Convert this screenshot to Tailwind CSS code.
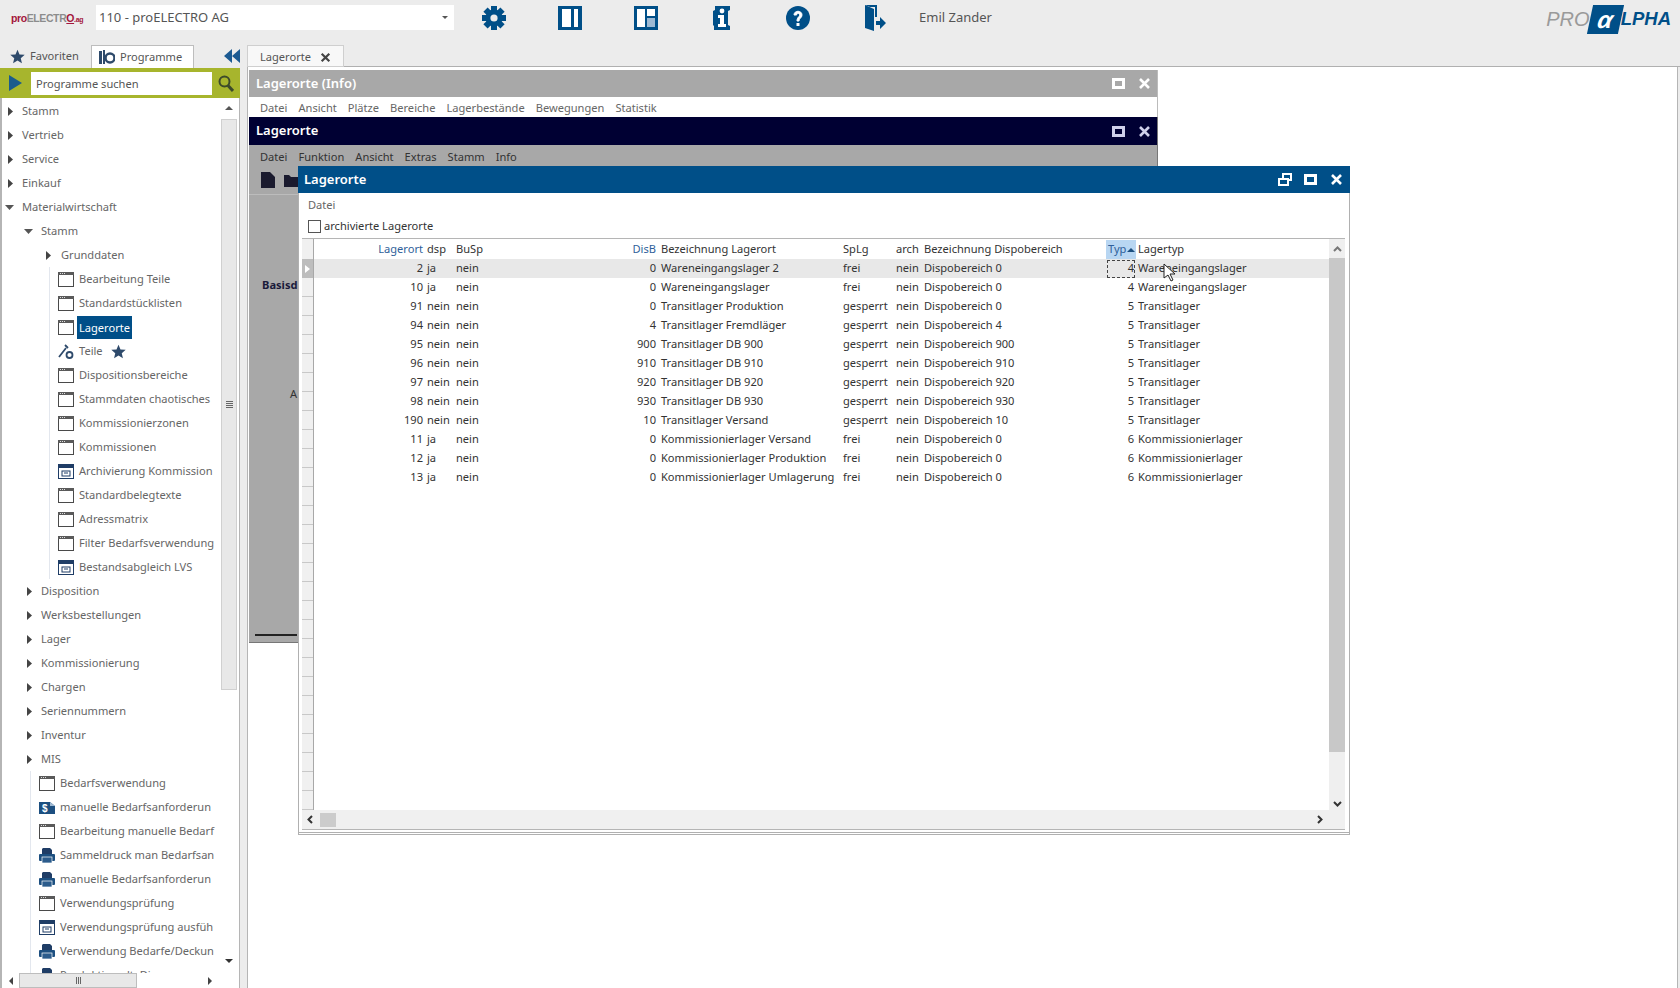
<!DOCTYPE html>
<html lang="de">
<head>
<meta charset="UTF-8">
<title>proALPHA - Lagerorte</title>
<script src="https://cdn.jsdelivr.net/npm/@tailwindcss/browser@4"></script>
</head>
<body class="w-[1680px] h-[988px] overflow-hidden bg-[#ececec] text-[11.1px] text-[#3d3d3d] font-['Noto_Sans',sans-serif]">

<!-- shared icons -->
<svg class="hidden">
  <symbol id="win" viewBox="0 0 16 15"><rect x=".5" y=".5" width="15" height="14" fill="#fff" stroke="#4a4a4a"/><rect x="0" y="0" width="16" height="3" fill="#5a5a5a"/><path d="M2 1.5h1M4 1.5h1M6 1.5h1" stroke="#ddd"/></symbol>
  <symbol id="arc" viewBox="0 0 16 15"><rect x=".5" y=".5" width="15" height="14" fill="#fff" stroke="#1f3d66"/><rect x="0" y="0" width="16" height="4" fill="#1f3d66"/><rect x="4" y="7" width="8" height="5" fill="#fff" stroke="#1f3d66"/><path d="M6 9h4" stroke="#1f3d66"/></symbol>
  <symbol id="prn" viewBox="0 0 16 15"><path d="M4 0h7l2 2v4H3V1z" fill="#1f3d66"/><rect x="0" y="6" width="16" height="7" rx="1" fill="#1c4f80"/><rect x="3" y="9" width="10" height="6" fill="#2c5c8c" stroke="#fff" stroke-width=".7"/></symbol>
  <symbol id="dol" viewBox="0 0 16 15"><path d="M0 2h11l5 4v8H0z" fill="#1c4f80"/><path d="M11 2l5 4h-5z" fill="#9fb9d2"/><text x="3" y="12" font-size="10" font-weight="700" fill="#fff" font-family="Liberation Sans">$</text></symbol>
  <symbol id="ar" viewBox="0 0 6 9"><path d="M1 0l5 4.5L1 9z" fill="#444"/></symbol>
  <symbol id="ad" viewBox="0 0 9 6"><path d="M0 1h9L4.5 6z" fill="#555"/></symbol>
  <symbol id="max" viewBox="0 0 13 13"><path fill-rule="evenodd" d="M0 1h13v11H0zM3 4v5h7V4z" fill="currentColor"/></symbol>
  <symbol id="cls" viewBox="0 0 13 13"><path d="M2 2l9 9M11 2l-9 9" stroke="currentColor" stroke-width="2.6"/></symbol>
  <symbol id="star" viewBox="0 0 24 24"><path d="M12 1l3.2 7.6 8.3.7-6.3 5.4 1.9 8.1L12 18.5l-7.1 4.3 1.9-8.1L.5 9.3l8.3-.7z" fill="#2e4a6b"/></symbol>
</svg>

<!-- top bar -->
<header class="h-[45px] flex items-start">
  <div class="w-[96px] pl-[11px] pt-[11px] text-[10.5px] font-bold tracking-[-0.4px] font-['Liberation_Sans',sans-serif] leading-[14px]"><span class="text-[#a3163c]">pro</span><span class="text-[#8c8c8c]">ELECTR</span><span class="text-[#a3163c] underline">O</span><span class="text-[#a3163c] text-[7px]">.ag</span></div>
  <div class="mt-[5px] w-[358px] h-[25px] bg-white flex items-center justify-between pl-[3px] pr-[6px] text-[13px] text-[#555]"><span>110 - proELECTRO AG</span><span class="w-0 h-0 border-x-[3px] border-t-[3px] border-x-transparent border-t-[#555]"></span></div>
  <div class="ml-[27px] mt-[5px] flex gap-[50px]">
    <svg class="w-[26px] h-[26px]" viewBox="0 0 26 26" fill="#004f88"><g><rect x="10" y="1" width="6" height="24"/><rect x="10" y="1" width="6" height="24" transform="rotate(45 13 13)"/><rect x="10" y="1" width="6" height="24" transform="rotate(90 13 13)"/><rect x="10" y="1" width="6" height="24" transform="rotate(135 13 13)"/></g><circle cx="13" cy="13" r="8.5"/><circle cx="13" cy="13" r="3.6" fill="#ececec"/></svg>
    <svg class="w-[26px] h-[26px]" viewBox="0 0 26 26"><rect x="1" y="1" width="24" height="24" fill="#004f88"/><rect x="5" y="4" width="9" height="18" fill="#fff"/><rect x="17" y="4" width="4" height="18" fill="#fff"/></svg>
    <svg class="w-[26px] h-[26px]" viewBox="0 0 26 26"><rect x="1" y="1" width="24" height="24" fill="#004f88"/><rect x="4" y="4" width="8" height="18" fill="#fff"/><rect x="14" y="4" width="8" height="7" fill="#fff"/><rect x="14" y="13" width="8" height="9" fill="#9db9d3"/></svg>
    <svg class="w-[26px] h-[26px]" viewBox="0 0 26 26"><path d="M6 1h15v4l-2 1v14l2 1v4H5v-4l-1-1V6l2-1z" fill="#004f88"/><circle cx="13" cy="6" r="2.4" fill="#fff"/><path d="M9 10h6v9h2v3H9v-3h2v-6H9z" fill="#fff"/></svg>
    <svg class="w-[26px] h-[26px]" viewBox="0 0 26 26"><circle cx="13" cy="13" r="12" fill="#004f88"/><path d="M9 10c0-5 8-5 8 0 0 3-3 3-3 6h-2c0-4 2.600-4 2.600-6 0-2-3-2-3 0z" fill="#fff" stroke="#fff"/><rect x="11.500" y="18" width="3" height="3" fill="#fff"/></svg>
    <svg class="w-[26px] h-[28px] -mt-px" viewBox="0 0 26 28"><path d="M4 1l9 4v22l-9-3z" fill="#004f88"/><path d="M4 1h12v12h-2V3H9z" fill="#004f88"/><path d="M15 17h4v-4l6 6-6 6v-4h-4z" fill="#004f88"/></svg>
  </div>
  <div class="ml-[32px] mt-[8px] text-[13px] text-[#555]">Emil Zander</div>
  <div class="ml-auto mr-[9px] mt-[4px] flex items-center h-[30px] italic font-['Liberation_Sans',sans-serif] text-[20px]">
    <span class="text-[#9a9a9a]">PRO</span>
    <span class="w-[31px] h-[29px] bg-[#004f88] -skew-x-12 flex items-center justify-center text-white text-[24px] font-bold leading-none">α</span>
    <span class="text-[#004f88] font-bold text-[18.5px]">LPHA</span>
  </div>
</header>

<div class="flex h-[943px]">
  <!-- left panel -->
  <aside class="w-[247px] flex flex-col shrink-0">
    <div class="h-[23px] flex items-start pl-[10px] shrink-0">
      <div class="flex items-center gap-[5px] h-[22px] w-[81px] text-[#555]"><svg class="w-[15px] h-[15px]"><use href="#star"/></svg>Favoriten</div>
      <div class="h-[23px] w-[103px] bg-white border border-b-0 border-[#bdbdbd] flex items-center gap-[5px] pl-[7px] text-[#555]">
        <svg class="w-[16px] h-[15px]" viewBox="0 0 16 15"><rect x="0" y="1" width="3" height="13" fill="#2e4a6b"/><rect x="4" y="0" width="2" height="14" fill="#2e4a6b"/><circle cx="11" cy="8" r="4.500" fill="none" stroke="#2e4a6b" stroke-width="2.500"/></svg>Programme
      </div>
      <svg class="ml-[30px] mt-[4px] w-[16px] h-[14px]" viewBox="0 0 16 14" fill="#1c5a92"><path d="M8 0v14L0 7zM16 0v14L8 7z"/></svg>
    </div>
    <div class="w-[240px] h-[30px] bg-[#a7b52d] flex items-center shrink-0">
      <svg class="ml-[9px] w-[13px] h-[16px]" viewBox="0 0 13 16"><path d="M0 0l13 8-13 8z" fill="#1b5c8c"/></svg>
      <div class="ml-[9px] w-[181px] h-[23px] bg-white pl-[5px] leading-[23px] text-[#555]">Programme suchen</div>
      <svg class="ml-[6px] w-[16px] h-[17px]" viewBox="0 0 16 17" fill="none" stroke="#3c4a2a" stroke-width="2"><circle cx="6.500" cy="6.500" r="5"/><path d="M10 10.500l5 5.500" stroke-width="3"/></svg>
    </div>
    <div class="w-[240px] flex-1 min-h-0 bg-white border-l-2 border-r border-[#b5b5b5] flex flex-col">
      <div class="flex flex-1 min-h-0">
        <nav class="flex-1 min-w-0 overflow-hidden pt-px text-[#666] [&_div]:whitespace-nowrap">
          <div class="h-[24px] flex items-center pl-[5px] gap-[9px]"><svg class="w-[6px] h-[9px]"><use href="#ar"/></svg>Stamm</div>
          <div class="h-[24px] flex items-center pl-[5px] gap-[9px]"><svg class="w-[6px] h-[9px]"><use href="#ar"/></svg>Vertrieb</div>
          <div class="h-[24px] flex items-center pl-[5px] gap-[9px]"><svg class="w-[6px] h-[9px]"><use href="#ar"/></svg>Service</div>
          <div class="h-[24px] flex items-center pl-[5px] gap-[9px]"><svg class="w-[6px] h-[9px]"><use href="#ar"/></svg>Einkauf</div>
          <div class="h-[24px] flex items-center pl-[3px] gap-[8px]"><svg class="w-[9px] h-[6px]"><use href="#ad"/></svg>Materialwirtschaft</div>
          <div class="h-[24px] flex items-center pl-[22px] gap-[8px]"><svg class="w-[9px] h-[6px]"><use href="#ad"/></svg>Stamm</div>
          <div class="h-[24px] flex items-center pl-[43px] gap-[10px]"><svg class="w-[6px] h-[9px]"><use href="#ar"/></svg>Grunddaten</div>
          <div class="ml-[47px] border-l border-[#e3e7ee] pl-[8px]">
            <div class="h-[24px] flex items-center gap-[5px]"><svg class="w-[16px] h-[15px]"><use href="#win"/></svg>Bearbeitung Teile</div>
            <div class="h-[24px] flex items-center gap-[5px]"><svg class="w-[16px] h-[15px]"><use href="#win"/></svg>Standardstücklisten</div>
            <div class="h-[24px] flex items-center gap-[3px]"><svg class="w-[16px] h-[15px]"><use href="#win"/></svg><span class="bg-[#004f88] text-white h-[23px] leading-[23px] px-[2px]">Lagerorte</span></div>
            <div class="h-[24px] flex items-center gap-[5px]"><svg class="w-[16px] h-[15px]" viewBox="0 0 16 15" fill="none" stroke="#2e4a6b" stroke-width="1.800"><path d="M1 13L8 4M7 1l3 3"/><circle cx="11.500" cy="11" r="3"/></svg>Teile<svg class="ml-[3px] w-[15px] h-[15px]"><use href="#star"/></svg></div>
            <div class="h-[24px] flex items-center gap-[5px]"><svg class="w-[16px] h-[15px]"><use href="#win"/></svg>Dispositionsbereiche</div>
            <div class="h-[24px] flex items-center gap-[5px]"><svg class="w-[16px] h-[15px]"><use href="#win"/></svg>Stammdaten chaotisches</div>
            <div class="h-[24px] flex items-center gap-[5px]"><svg class="w-[16px] h-[15px]"><use href="#win"/></svg>Kommissionierzonen</div>
            <div class="h-[24px] flex items-center gap-[5px]"><svg class="w-[16px] h-[15px]"><use href="#win"/></svg>Kommissionen</div>
            <div class="h-[24px] flex items-center gap-[5px]"><svg class="w-[16px] h-[15px]"><use href="#arc"/></svg>Archivierung Kommission</div>
            <div class="h-[24px] flex items-center gap-[5px]"><svg class="w-[16px] h-[15px]"><use href="#win"/></svg>Standardbelegtexte</div>
            <div class="h-[24px] flex items-center gap-[5px]"><svg class="w-[16px] h-[15px]"><use href="#win"/></svg>Adressmatrix</div>
            <div class="h-[24px] flex items-center gap-[5px]"><svg class="w-[16px] h-[15px]"><use href="#win"/></svg>Filter Bedarfsverwendung</div>
            <div class="h-[24px] flex items-center gap-[5px]"><svg class="w-[16px] h-[15px]"><use href="#arc"/></svg>Bestandsabgleich LVS</div>
          </div>
          <div class="h-[24px] flex items-center pl-[24px] gap-[9px]"><svg class="w-[6px] h-[9px]"><use href="#ar"/></svg>Disposition</div>
          <div class="h-[24px] flex items-center pl-[24px] gap-[9px]"><svg class="w-[6px] h-[9px]"><use href="#ar"/></svg>Werksbestellungen</div>
          <div class="h-[24px] flex items-center pl-[24px] gap-[9px]"><svg class="w-[6px] h-[9px]"><use href="#ar"/></svg>Lager</div>
          <div class="h-[24px] flex items-center pl-[24px] gap-[9px]"><svg class="w-[6px] h-[9px]"><use href="#ar"/></svg>Kommissionierung</div>
          <div class="h-[24px] flex items-center pl-[24px] gap-[9px]"><svg class="w-[6px] h-[9px]"><use href="#ar"/></svg>Chargen</div>
          <div class="h-[24px] flex items-center pl-[24px] gap-[9px]"><svg class="w-[6px] h-[9px]"><use href="#ar"/></svg>Seriennummern</div>
          <div class="h-[24px] flex items-center pl-[24px] gap-[9px]"><svg class="w-[6px] h-[9px]"><use href="#ar"/></svg>Inventur</div>
          <div class="h-[24px] flex items-center pl-[24px] gap-[9px]"><svg class="w-[6px] h-[9px]"><use href="#ar"/></svg>MIS</div>
          <div class="ml-[28px] border-l border-[#e3e7ee] pl-[8px]">
            <div class="h-[24px] flex items-center gap-[5px]"><svg class="w-[16px] h-[15px]"><use href="#win"/></svg>Bedarfsverwendung</div>
            <div class="h-[24px] flex items-center gap-[5px]"><svg class="w-[16px] h-[15px]"><use href="#dol"/></svg>manuelle Bedarfsanforderun</div>
            <div class="h-[24px] flex items-center gap-[5px]"><svg class="w-[16px] h-[15px]"><use href="#win"/></svg>Bearbeitung manuelle Bedarf</div>
            <div class="h-[24px] flex items-center gap-[5px]"><svg class="w-[16px] h-[15px]"><use href="#prn"/></svg>Sammeldruck man Bedarfsan</div>
            <div class="h-[24px] flex items-center gap-[5px]"><svg class="w-[16px] h-[15px]"><use href="#prn"/></svg>manuelle Bedarfsanforderun</div>
            <div class="h-[24px] flex items-center gap-[5px]"><svg class="w-[16px] h-[15px]"><use href="#win"/></svg>Verwendungsprüfung</div>
            <div class="h-[24px] flex items-center gap-[5px]"><svg class="w-[16px] h-[15px]"><use href="#arc"/></svg>Verwendungsprüfung ausfüh</div>
            <div class="h-[24px] flex items-center gap-[5px]"><svg class="w-[16px] h-[15px]"><use href="#prn"/></svg>Verwendung Bedarfe/Deckun</div>
            <div class="h-[24px] flex items-center gap-[5px]"><svg class="w-[16px] h-[15px]"><use href="#prn"/></svg>Produktion alt. Dis</div>
          </div>
        </nav>
        <div class="w-[16px] mr-[2px] bg-white flex flex-col items-center shrink-0">
          <div class="h-[21px] pt-[8px]"><div class="w-0 h-0 border-x-[4px] border-b-[4px] border-x-transparent border-b-[#555]"></div></div>
          <div class="h-[571px] w-full bg-[#e8e8e8] border border-[#d0d0d0] flex flex-col items-center justify-center gap-px"><i class="w-[7px] h-px bg-[#666]"></i><i class="w-[7px] h-px bg-[#666]"></i><i class="w-[7px] h-px bg-[#666]"></i><i class="w-[7px] h-px bg-[#666]"></i></div>
          <div class="mt-auto h-[17px] pt-[3px]"><div class="w-0 h-0 border-x-[4px] border-t-[4px] border-x-transparent border-t-[#333]"></div></div>
        </div>
      </div>
      <div class="h-[15px] bg-white flex items-center shrink-0">
        <div class="ml-[7px] w-0 h-0 border-y-[4px] border-r-[4px] border-y-transparent border-r-[#444]"></div>
        <div class="ml-[6px] w-[118px] h-[15px] bg-[#e8e8e8] border border-[#bdbdbd] flex items-center justify-center gap-px"><i class="w-px h-[7px] bg-[#666]"></i><i class="w-px h-[7px] bg-[#666]"></i><i class="w-px h-[7px] bg-[#666]"></i></div>
        <div class="ml-[71px] w-0 h-0 border-y-[4px] border-l-[4px] border-y-transparent border-l-[#444]"></div>
      </div>
    </div>
  </aside>

  <!-- main area -->
  <main class="flex-1 flex flex-col min-w-0">
    <div class="h-[22px] border-b border-[#b0b0b0] shrink-0 -mb-px">
      <div class="w-[97px] h-[22px] bg-[#f8f8f8] border border-[#cfcfcf] flex items-center pl-[12px] pt-[2px] gap-[9px] text-[#555]">Lagerorte<svg class="w-[11px] h-[11px] text-[#444]"><use href="#cls"/></svg></div>
    </div>
    <div class="relative flex-1 bg-white border-l border-r border-[#b5b5b5] mr-[2px] mt-px">

      <!-- Lagerorte (Info), back window -->
      <section class="absolute left-px top-[3px] w-[909px] border-r border-[#bbb]">
        <div class="h-[27px] bg-[#a8a8a8] flex items-center pl-[7px] pr-[6px] text-white text-[13px] font-semibold">Lagerorte (Info)
          <svg class="ml-auto w-[13px] h-[13px]"><use href="#max"/></svg><svg class="ml-[13px] w-[13px] h-[13px]"><use href="#cls"/></svg></div>
        <div class="h-[20px] flex items-center gap-[11px] pl-[11px] pt-[3px] text-[#666]"><span>Datei</span><span>Ansicht</span><span>Plätze</span><span>Bereiche</span><span>Lagerbestände</span><span>Bewegungen</span><span>Statistik</span></div>
      </section>

      <!-- Lagerorte, middle window -->
      <section class="absolute left-px top-[50px] w-[909px] h-[526px] bg-[#a8a8a8] border-b border-r border-[#777] flex flex-col">
        <div class="h-[28px] bg-[#000033] flex items-center pl-[7px] pr-[6px] text-white text-[13px] font-semibold shrink-0">Lagerorte
          <svg class="ml-auto w-[13px] h-[13px] text-[#cfd0ea]"><use href="#max"/></svg><svg class="ml-[13px] w-[13px] h-[13px] text-[#cfd0ea]"><use href="#cls"/></svg></div>
        <div class="h-[21px] flex items-center gap-[11px] pl-[11px] pt-[3px] text-[#333] shrink-0"><span>Datei</span><span>Funktion</span><span>Ansicht</span><span>Extras</span><span>Stamm</span><span>Info</span></div>
        <div class="h-[29px] flex items-center gap-[9px] pl-[12px] border-b border-[#bcbcbc] shrink-0">
          <svg class="w-[14px] h-[16px]" viewBox="0 0 14 16"><path d="M0 0h9l5 5v11H0z" fill="#1a1a2e"/></svg>
          <svg class="w-[14px] h-[14px]" viewBox="0 0 14 14"><path d="M0 2h5l2 2h7v10H0z" fill="#1a1a2e"/></svg>
        </div>
        <div class="ml-[13px] mt-[82px] font-bold text-[#1a1a3a] shrink-0">Basisd</div>
        <div class="ml-[41px] mt-[92px] text-[#333] shrink-0">A</div>
        <div class="mt-auto mb-[6px] ml-[6px] w-[42px] h-[2px] bg-[#222] shrink-0"></div>
      </section>

      <!-- Lagerorte, front window -->
      <section class="absolute left-[50px] top-[99px] w-[1052px] h-[669px] bg-white border-x border-b-[3px] border-double border-[#b0b0b0] flex flex-col">
        <div class="h-[27px] bg-[#004f88] -mx-px flex items-center pl-[6px] pr-[7px] text-white text-[13px] font-semibold shrink-0">Lagerorte
          <svg class="ml-auto w-[14px] h-[13px]" viewBox="0 0 14 13"><path fill-rule="evenodd" d="M4 0h10v8h-3v5H0V5h4zM6 2v3h5v1h1V2zM2 7v4h7V7z" fill="#fff"/></svg>
          <svg class="ml-[12px] w-[13px] h-[13px]"><use href="#max"/></svg><svg class="ml-[13px] w-[13px] h-[13px]"><use href="#cls"/></svg></div>
        <div class="h-[22px] pl-[9px] leading-[23px] text-[#666] shrink-0">Datei</div>
        <label class="h-[23px] flex items-center pl-[9px] gap-[3px] text-[#333] shrink-0"><span class="w-[13px] h-[13px] border border-[#555] bg-white"></span>archivierte Lagerorte</label>

        <!-- data grid -->
        <div class="ml-[3px] mr-[4px] h-[592px] border-t border-[#b5b5b5] flex flex-col shrink-0">
          <div class="flex flex-1 min-h-0">
            <div class="w-[12px] bg-[#f0f0f0] border-r border-[#a8a8a8] flex flex-col shrink-0">
              <div class="h-[20px] shrink-0"></div>
              <div class="h-[19px] bg-[#bdbdbd] flex items-center justify-center shrink-0"><svg class="w-[5px] h-[8px]" viewBox="0 0 5 8"><path d="M0 0l5 4-5 4z" fill="#fff"/></svg></div>
              <div class="flex-1 bg-[repeating-linear-gradient(to_bottom,#f0f0f0_0,#f0f0f0_18px,#c8c8c8_18px,#c8c8c8_19px)]"></div>
            </div>
            <div class="flex-1 min-w-0 overflow-hidden pt-px">
              <table class="table-fixed w-[1015px] border-collapse text-[#333] [&_td]:whitespace-nowrap [&_td]:h-[19px] [&_td]:p-0 [&_th]:whitespace-nowrap [&_th]:h-[19px] [&_th]:p-0 [&_th]:font-normal [&_th]:text-left [&_tr>*:nth-child(1)]:text-right [&_tr>*:nth-child(1)]:pr-[2px] [&_tr>*:nth-child(2)]:pl-[2px] [&_tr>*:nth-child(3)]:pl-[2px] [&_tr>*:nth-child(4)]:text-right [&_tr>*:nth-child(4)]:pr-[3px] [&_tr>*:nth-child(5)]:pl-[2px] [&_tr>*:nth-child(7)]:pl-px [&_tr>*:nth-child(8)]:pl-px [&_tr>*:nth-child(9)]:text-right [&_tr>*:nth-child(9)]:pr-[2px] [&_tr>*:nth-child(10)]:pl-[2px]">
                <colgroup><col class="w-[111px]"><col class="w-[29px]"><col class="w-[46px]"><col class="w-[159px]"><col class="w-[184px]"><col class="w-[52px]"><col class="w-[28px]"><col class="w-[183px]"><col class="w-[30px]"><col></colgroup>
                <thead><tr><th class="!text-right text-[#2f5f9a]">Lagerort</th><th>dsp</th><th>BuSp</th><th class="!text-right text-[#2f5f9a]">DisB</th><th>Bezeichnung Lagerort</th><th>SpLg</th><th>arch</th><th>Bezeichnung Dispobereich</th><th class="bg-[#b8d6f2] !text-left !pr-0"><span class="text-[#2f5f9a] pl-[2px]">Typ</span><span class="inline-block align-middle ml-[1px] w-0 h-0 border-x-[4px] border-b-[4px] border-x-transparent border-b-[#1c4f80]"></span></th><th>Lagertyp</th></tr></thead>
                <tbody>
                  <tr class="bg-[#e8e8e8]"><td>2</td><td>ja</td><td>nein</td><td>0</td><td>Wareneingangslager 2</td><td>frei</td><td>nein</td><td>Dispobereich 0</td><td class="relative">4<span class="absolute left-[1px] right-[1px] top-[1px] bottom-0 border border-dashed border-[#444]"></span></td><td>Wareneingangslager</td></tr>
                  <tr><td>10</td><td>ja</td><td>nein</td><td>0</td><td>Wareneingangslager</td><td>frei</td><td>nein</td><td>Dispobereich 0</td><td>4</td><td>Wareneingangslager</td></tr>
                  <tr><td>91</td><td>nein</td><td>nein</td><td>0</td><td>Transitlager Produktion</td><td>gesperrt</td><td>nein</td><td>Dispobereich 0</td><td>5</td><td>Transitlager</td></tr>
                  <tr><td>94</td><td>nein</td><td>nein</td><td>4</td><td>Transitlager Fremdläger</td><td>gesperrt</td><td>nein</td><td>Dispobereich 4</td><td>5</td><td>Transitlager</td></tr>
                  <tr><td>95</td><td>nein</td><td>nein</td><td>900</td><td>Transitlager DB 900</td><td>gesperrt</td><td>nein</td><td>Dispobereich 900</td><td>5</td><td>Transitlager</td></tr>
                  <tr><td>96</td><td>nein</td><td>nein</td><td>910</td><td>Transitlager DB 910</td><td>gesperrt</td><td>nein</td><td>Dispobereich 910</td><td>5</td><td>Transitlager</td></tr>
                  <tr><td>97</td><td>nein</td><td>nein</td><td>920</td><td>Transitlager DB 920</td><td>gesperrt</td><td>nein</td><td>Dispobereich 920</td><td>5</td><td>Transitlager</td></tr>
                  <tr><td>98</td><td>nein</td><td>nein</td><td>930</td><td>Transitlager DB 930</td><td>gesperrt</td><td>nein</td><td>Dispobereich 930</td><td>5</td><td>Transitlager</td></tr>
                  <tr><td>190</td><td>nein</td><td>nein</td><td>10</td><td>Transitlager Versand</td><td>gesperrt</td><td>nein</td><td>Dispobereich 10</td><td>5</td><td>Transitlager</td></tr>
                  <tr><td>11</td><td>ja</td><td>nein</td><td>0</td><td>Kommissionierlager Versand</td><td>frei</td><td>nein</td><td>Dispobereich 0</td><td>6</td><td>Kommissionierlager</td></tr>
                  <tr><td>12</td><td>ja</td><td>nein</td><td>0</td><td>Kommissionierlager Produktion</td><td>frei</td><td>nein</td><td>Dispobereich 0</td><td>6</td><td>Kommissionierlager</td></tr>
                  <tr><td>13</td><td>ja</td><td>nein</td><td>0</td><td>Kommissionierlager Umlagerung</td><td>frei</td><td>nein</td><td>Dispobereich 0</td><td>6</td><td>Kommissionierlager</td></tr>
                </tbody>
              </table>
            </div>
            <div class="w-[16px] bg-[#efefef] flex flex-col items-center shrink-0">
              <div class="h-[19px] pt-[7px] shrink-0"><svg class="w-[9px] h-[6px]" viewBox="0 0 9 6" fill="none" stroke="#777" stroke-width="2"><path d="M1 5l3.500-3.500L8 5"/></svg></div>
              <div class="h-[494px] w-full bg-[#c8c8c8] shrink-0"></div>
              <div class="mt-auto h-[9px] shrink-0"><svg class="w-[9px] h-[6px]" viewBox="0 0 9 6" fill="none" stroke="#333" stroke-width="2"><path d="M1 1l3.500 3.500L8 1"/></svg></div>
            </div>
          </div>
          <div class="h-[20px] bg-[#f0f0f0] border-b border-[#b5b5b5] flex items-center shrink-0">
            <svg class="ml-[5px] w-[6px] h-[9px]" viewBox="0 0 6 9" fill="none" stroke="#333" stroke-width="2"><path d="M5 1L1.500 4.500 5 8"/></svg>
            <div class="ml-[7px] w-[16px] h-[14px] bg-[#cccccc]"></div>
            <svg class="ml-[981px] w-[6px] h-[9px]" viewBox="0 0 6 9" fill="none" stroke="#333" stroke-width="2"><path d="M1 1l3.500 3.500L1 8"/></svg>
          </div>
        </div>
      </section>

      <!-- mouse pointer -->
      <svg class="absolute left-[915px] top-[196px] w-[14px] h-[20px]" viewBox="0 0 14 20"><path d="M1 1v14l4-3 3 6 2-1-3-6h5z" fill="#fff" stroke="#222"/></svg>
    </div>
  </main>
</div>
</body>
</html>
